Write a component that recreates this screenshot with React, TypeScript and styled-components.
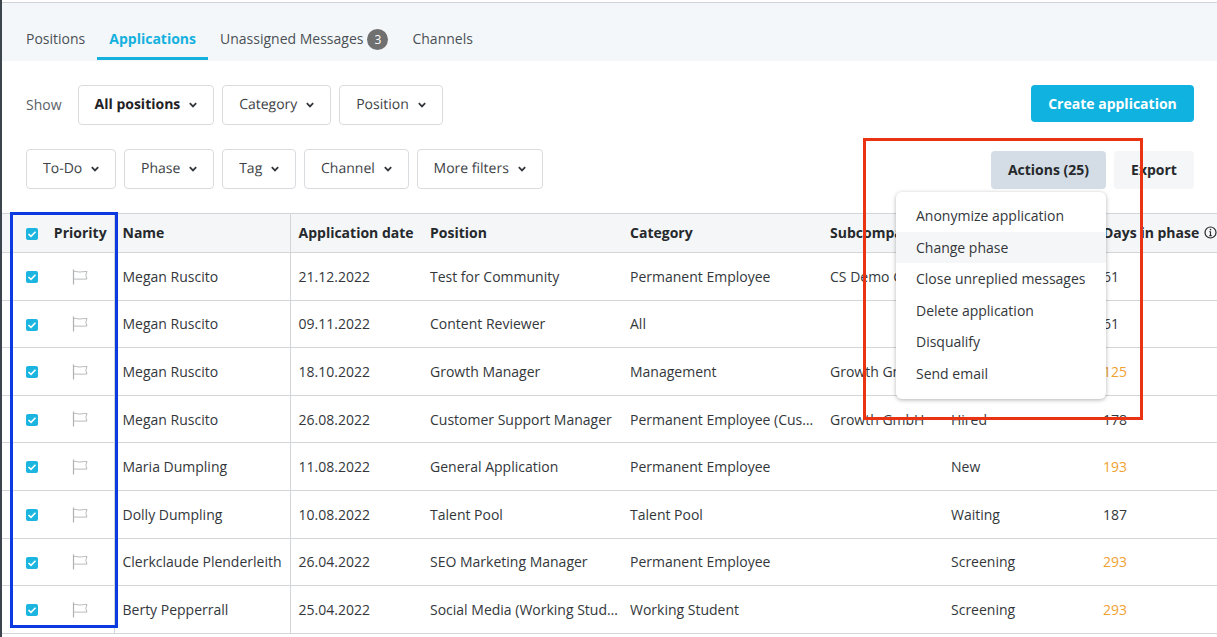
import React from 'react';
import styled, { createGlobalStyle } from 'styled-components';

const GlobalStyle = createGlobalStyle`
html, body {
	margin: 0;
	height: 100%;
	overflow: hidden;
	background: #fff;
	font-family: 'Open Sans', 'Liberation Sans', sans-serif;
	font-size: 14px;
	color: #26292c;
}
* { box-sizing: border-box; }
`;

const Page = styled.div`
position: relative;
width: 1217px;
height: 637px;
overflow: hidden;
border-left: 2px solid #3c454d;
`;

const TabBar = styled.div`
height: 59px;
margin-top: 2px;
padding: 0 0 0 24px;
display: flex;
align-items: flex-end;
background: #f4f7f9;
border-top: 1px solid #d0d4d8;
`;

const Tab = styled.div<{ $active?: boolean }>`
height: 37px;
padding: 6px 12px 0;
margin-bottom: 1px;
display: flex;
align-items: flex-start;
gap: 4px;
color: ${p => (p.$active ? '#14b1de' : '#4a5055')};
font-weight: ${p => (p.$active ? 700 : 400)};
border-bottom: 3px solid ${p => (p.$active ? '#14b1de' : 'transparent')};
white-space: nowrap;

&:first-child { padding-left: 0; }
`;

const Badge = styled.span`
width: 21px;
height: 21px;
border-radius: 50%;
background: #707070;
color: #fff;
font-size: 12px;
display: flex;
align-items: center;
justify-content: center;
`;

const Filters = styled.div`
height: 152px;
padding: 24px 23px 0 24px;
display: flex;
flex-direction: column;
gap: 24px;
`;

const FilterRow = styled.div`
display: flex;
justify-content: space-between;
align-items: flex-start;
height: 40px;
`;

const Group = styled.div`
display: flex;
align-items: center;
gap: 8px;
`;

const ShowLabel = styled.span`
color: #5a6066;
margin-right: 8px;
margin-top: -2px;
`;

const Select = styled.div<{ $strong?: boolean }>`
height: 40px;
padding: 0 15.8px 1px 16px;
display: flex;
align-items: center;
gap: 9px;
background: #fff;
border: 1px solid #d9dcdf;
border-radius: 4px;
color: ${p => (p.$strong ? '#1e2124' : '#3d4246')};
font-weight: ${p => (p.$strong ? 700 : 400)};
white-space: nowrap;
text-rendering: geometricPrecision;
`;

const CreateButton = styled.div`
width: 163px;
height: 37px;
border-radius: 4px;
background: #10b3e0;
color: #fff;
font-weight: 700;
display: flex;
align-items: center;
justify-content: center;
`;

const ActionButton = styled.div<{ $pressed?: boolean }>`
width: ${p => (p.$pressed ? '115px' : '80px')};
height: 38px;
margin-top: 2px;
padding-bottom: 2px;
border-radius: 4px;
background: ${p => (p.$pressed ? '#d4dde5' : '#f4f6f8')};
color: #26292c;
font-weight: 700;
display: flex;
align-items: center;
justify-content: center;
`;

const Table = styled.table`
width: 1215px;
table-layout: fixed;
border-collapse: collapse;
`;

const HeadRow = styled.tr`
height: 39px;
background: #f4f6f8;
border-top: 1px solid #d3d6d9;
border-bottom: 1px solid #d3d6d9;
`;

const Row = styled.tr`
height: 47.6px;
border-bottom: 1px solid #d3d6d9;
`;

const Th = styled.th<{ $divider?: boolean }>`
padding: 0 0 2px 8px;
text-align: left;
font-weight: 700;
color: #26292c;
white-space: nowrap;
overflow: hidden;
border-right: ${p => (p.$divider ? '1px solid #d3d6d9' : 'none')};
`;

const Td = styled.td<{ $divider?: boolean; $warn?: boolean }>`
padding: 0 4px 0 8px;
text-align: left;
color: ${p => (p.$warn ? '#f0a230' : '#33373b')};
white-space: nowrap;
overflow: hidden;
text-overflow: ellipsis;
border-right: ${p => (p.$divider ? '1px solid #d3d6d9' : 'none')};
`;

const CheckTh = styled(Th)`
padding: 0 0 0 24px;
`;

const CheckTd = styled(Td)`
padding-left: 24px;
`;

const PriorityTh = styled(Th)`
padding: 0 1px 2px 0;
text-align: center;
`;

const PriorityTd = styled(Td)`
padding: 0 1px 0 0;
text-align: center;
`;

const CheckBox = styled.span`
width: 12px;
height: 12px;
margin-top: -2px;
border-radius: 2px;
background: #1cb5e0;
display: inline-flex;
align-items: center;
justify-content: center;
vertical-align: middle;
`;

const FlagIcon = styled.svg`
display: inline-block;
margin-top: -3px;
vertical-align: middle;
`;

const InfoIcon = styled.svg`
margin-left: 5px;
vertical-align: -1px;
`;

const Menu = styled.div`
position: absolute;
left: 894px;
top: 192px;
width: 210px;
height: 207px;
padding: 8px 0;
background: #fff;
border-radius: 6px;
box-shadow: 0 1px 4px rgba(0, 0, 0, 0.3);
`;

const MenuItem = styled.div<{ $active?: boolean }>`
height: 31.55px;
padding-left: 20px;
display: flex;
align-items: center;
white-space: nowrap;
color: #33373b;
background: ${p => (p.$active ? '#f5f6f7' : 'transparent')};
`;

const Callout = styled.div<{ $color: string; $x: number; $y: number; $w: number; $h: number }>`
position: absolute;
left: ${p => p.$x}px;
top: ${p => p.$y}px;
width: ${p => p.$w}px;
height: ${p => p.$h}px;
border: 3px solid ${p => p.$color};
pointer-events: none;
`;

const Chevron = () => (
	<svg width="8" height="6" viewBox="0 0 8 6" fill="none">
		<path d="M.8 1.2 4 4.5l3.2-3.3" stroke="#33373b" strokeWidth="1.8" />
	</svg>
);

const Check = () => (
	<svg width="10" height="8" viewBox="0 0 10 8" fill="none">
		<path d="M1.5 4 4 6.3 8.5 1.8" stroke="#fff" strokeWidth="1.6" />
	</svg>
);

const Flag = () => (
	<FlagIcon width="16" height="16" viewBox="0 0 16 16" fill="none">
		<path d="M1.5 15.5V.5" stroke="#aeb0b2" strokeWidth="1.2" />
		<path d="M1.5 2.5C4 2 6 3.2 8 3s4-.5 7-.5L13.8 6.3 15 10c-4 .2-10 .2-13.5 0" stroke="#b8babc" strokeWidth="1" />
	</FlagIcon>
);

const Info = () => (
	<InfoIcon width="13" height="13" viewBox="0 0 13 13" fill="none">
		<circle cx="6.5" cy="6.5" r="5.5" stroke="#26292c" strokeWidth="1.2" />
		<path d="M6.5 5.6v4M5.3 9.6h2.4M5.4 5.6h1.1" stroke="#26292c" strokeWidth="1.1" />
		<circle cx="6.5" cy="3.6" r=".8" fill="#26292c" />
	</InfoIcon>
);

const rows = [
	['Megan Ruscito', '21.12.2022', 'Test for Community', 'Permanent Employee', 'CS Demo GmbH', '', '61', false],
	['Megan Ruscito', '09.11.2022', 'Content Reviewer', 'All', '', '', '61', false],
	['Megan Ruscito', '18.10.2022', 'Growth Manager', 'Management', 'Growth GmbH', '', '125', true],
	['Megan Ruscito', '26.08.2022', 'Customer Support Manager', 'Permanent Employee (Customer)', 'Growth GmbH', 'Hired', '178', false],
	['Maria Dumpling', '11.08.2022', 'General Application', 'Permanent Employee', '', 'New', '193', true],
	['Dolly Dumpling', '10.08.2022', 'Talent Pool', 'Talent Pool', '', 'Waiting', '187', false],
	['Clerkclaude Plenderleith', '26.04.2022', 'SEO Marketing Manager', 'Permanent Employee', '', 'Screening', '293', true],
	['Berty Pepperrall', '25.04.2022', 'Social Media (Working Student)', 'Working Student', '', 'Screening', '293', true],
] as const;

const widths = [46, 66, 176, 132, 200, 200, 121, 152, 122];

const App = () => (
	<Page>
		<GlobalStyle />
		<TabBar>
			<Tab>Positions</Tab>
			<Tab $active>Applications</Tab>
			<Tab>Unassigned Messages <Badge>3</Badge></Tab>
			<Tab>Channels</Tab>
		</TabBar>
		<Filters>
			<FilterRow>
				<Group>
					<ShowLabel>Show</ShowLabel>
					<Select $strong>All positions <Chevron /></Select>
					<Select>Category <Chevron /></Select>
					<Select>Position <Chevron /></Select>
				</Group>
				<CreateButton>Create application</CreateButton>
			</FilterRow>
			<FilterRow>
				<Group>
					<Select>To-Do <Chevron /></Select>
					<Select>Phase <Chevron /></Select>
					<Select>Tag <Chevron /></Select>
					<Select>Channel <Chevron /></Select>
					<Select>More filters <Chevron /></Select>
				</Group>
				<Group>
					<ActionButton $pressed>Actions (25)</ActionButton>
					<ActionButton>Export</ActionButton>
				</Group>
			</FilterRow>
		</Filters>
		<Table>
			<colgroup>
				{widths.map((w, i) => <col key={i} style={{ width: w }} />)}
			</colgroup>
			<thead>
				<HeadRow>
					<CheckTh><CheckBox><Check /></CheckBox></CheckTh>
					<PriorityTh $divider>Priority</PriorityTh>
					<Th $divider>Name</Th>
					<Th>Application date</Th>
					<Th>Position</Th>
					<Th>Category</Th>
					<Th>Subcompany</Th>
					<Th>Phase</Th>
					<Th>Days in phase<Info /></Th>
				</HeadRow>
			</thead>
			<tbody>
				{rows.map((r, i) => (
					<Row key={i}>
						<CheckTd><CheckBox><Check /></CheckBox></CheckTd>
						<PriorityTd $divider><Flag /></PriorityTd>
						<Td $divider>{r[0]}</Td>
						<Td>{r[1]}</Td>
						<Td>{r[2]}</Td>
						<Td>{r[3]}</Td>
						<Td>{r[4]}</Td>
						<Td>{r[5]}</Td>
						<Td $warn={r[7]}>{r[6]}</Td>
					</Row>
				))}
			</tbody>
		</Table>
		<Menu>
			<MenuItem>Anonymize application</MenuItem>
			<MenuItem $active>Change phase</MenuItem>
			<MenuItem>Close unreplied messages</MenuItem>
			<MenuItem>Delete application</MenuItem>
			<MenuItem>Disqualify</MenuItem>
			<MenuItem>Send email</MenuItem>
		</Menu>
		<Callout $color="#ea3313" $x={861} $y={138} $w={280} $h={282} />
		<Callout $color="#0b3be0" $x={8} $y={212} $w={108} $h={416} />
	</Page>
);

export default App;
